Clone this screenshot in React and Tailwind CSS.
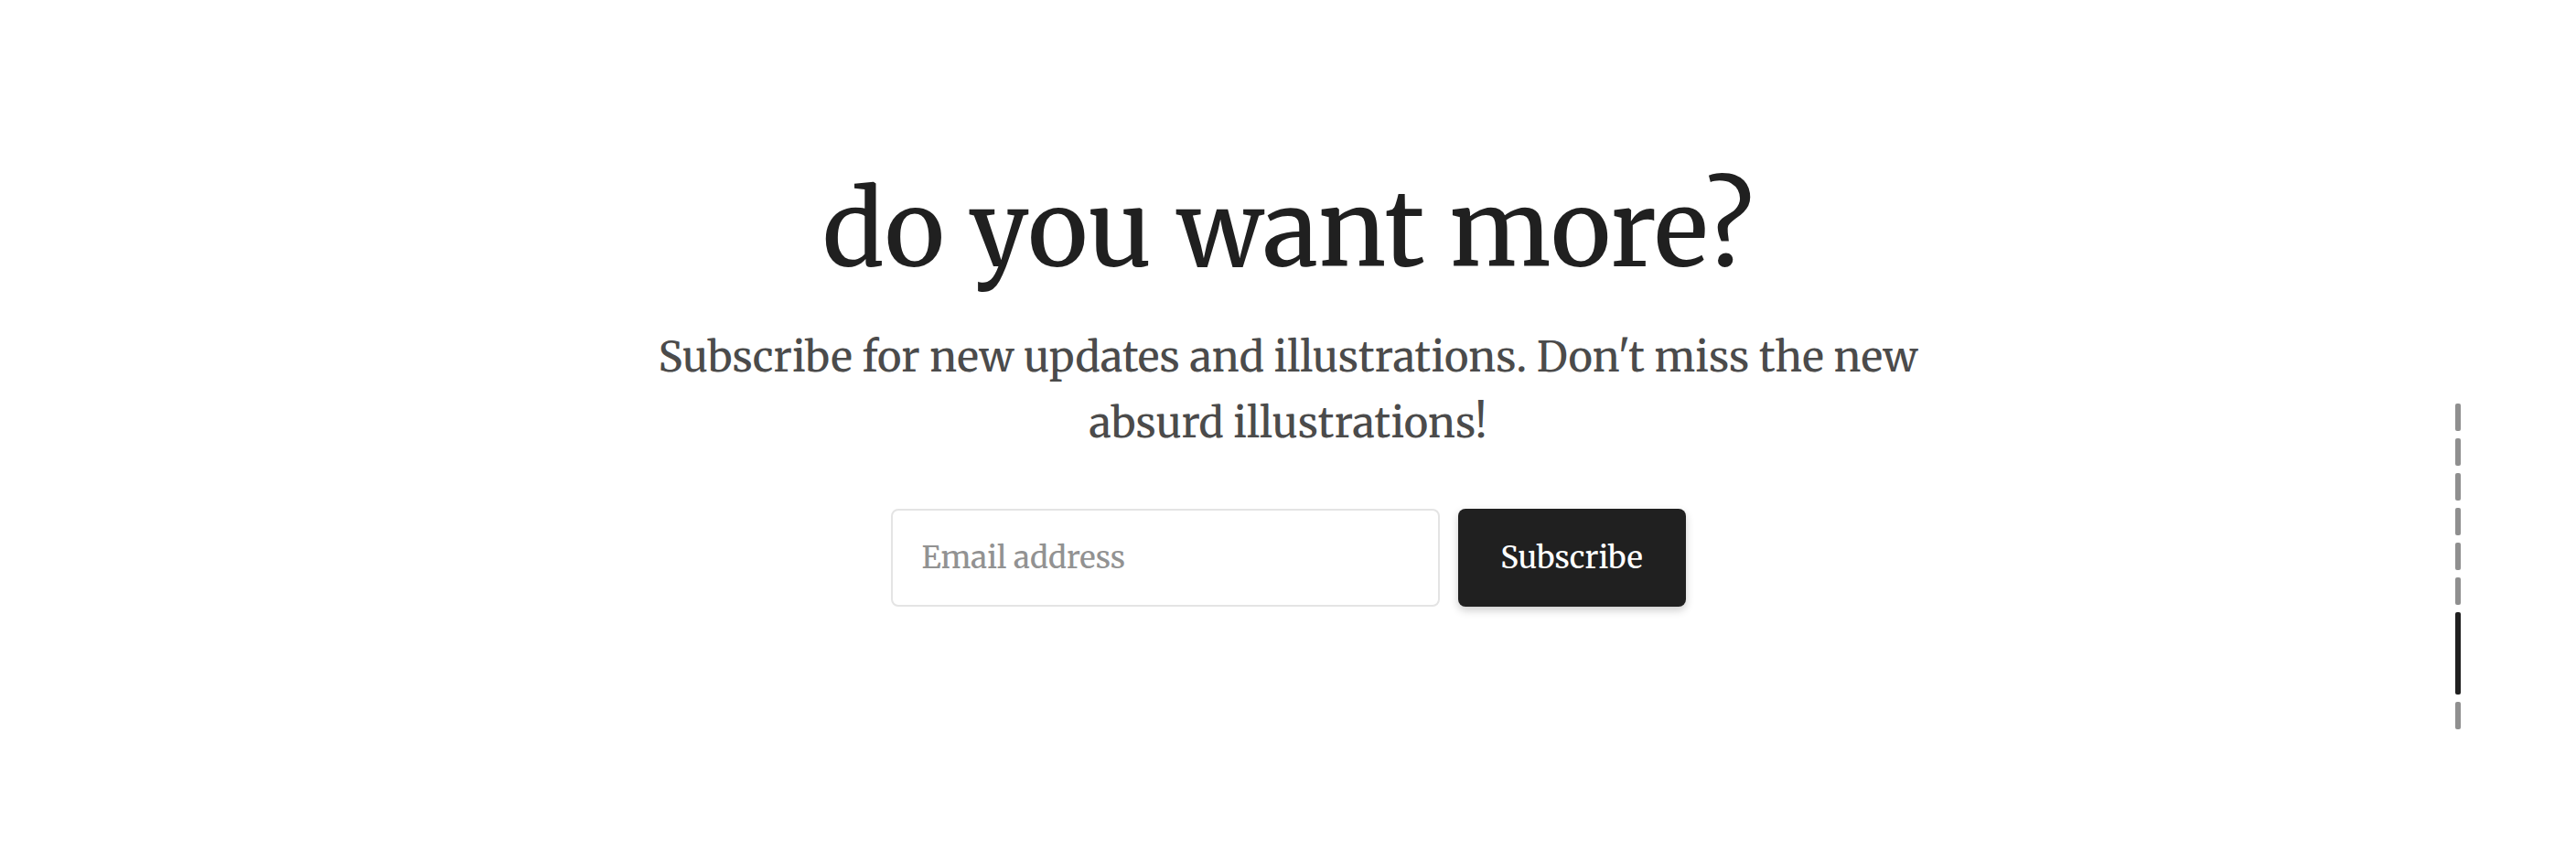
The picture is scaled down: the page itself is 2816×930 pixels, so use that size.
import { useState } from 'react';

const SECTIONS = ['Intro', 'About', 'Gallery', 'Prints', 'Process', 'Shop', 'Subscribe', 'Contact'];

const App = () => {
  const [email, setEmail] = useState('');
  const [active, setActive] = useState('Subscribe');

  const handleSubmit = (e) => {
    e.preventDefault();
    setEmail('');
  };

  return (
    <div className="grid min-h-screen grid-cols-[1fr_auto_1fr] bg-white font-['Merriweather','DejaVu_Serif_Condensed','DejaVu_Serif',serif] font-medium">
      <main className="col-start-2 flex flex-col items-center pt-[180px] text-center">
        <h1 className="text-[112px] leading-[144px] text-[#202020]">do you want more?</h1>
        <p className="mt-[30px] max-w-[1440px] text-[45px] leading-[72px] text-[#4b4b4b]">
          Subscribe for new updates and illustrations. Don't miss the new absurd illustrations!
        </p>
        <form onSubmit={handleSubmit} className="mt-[58px] flex gap-5">
          <input
            type="email"
            aria-label="Email address"
            placeholder="Email address"
            value={email}
            onChange={e => setEmail(e.target.value)}
            className="h-[107px] w-[600px] rounded-lg border-2 border-[#e4e4e4] px-8 text-[33px] placeholder:text-[#929292]"
          />
          <button
            type="submit"
            className="h-[107px] w-[249px] rounded-lg bg-[#202020] text-[33px] text-white shadow-[0_4px_10px_rgba(0,0,0,0.2)]"
          >
            Subscribe
          </button>
        </form>
      </main>

      <nav className="mt-[441px] mr-[126px] flex flex-col gap-2 justify-self-end">
        {SECTIONS.map(s => (
          <button
            key={s}
            type="button"
            aria-label={s}
            onClick={() => setActive(s)}
            className={`w-1.5 rounded-xs ${active === s ? 'h-[90px] bg-[#202020]' : 'h-[30px] bg-[#8f8f8f]'}`}
          />
        ))}
      </nav>
    </div>
  );
};

export default App;
